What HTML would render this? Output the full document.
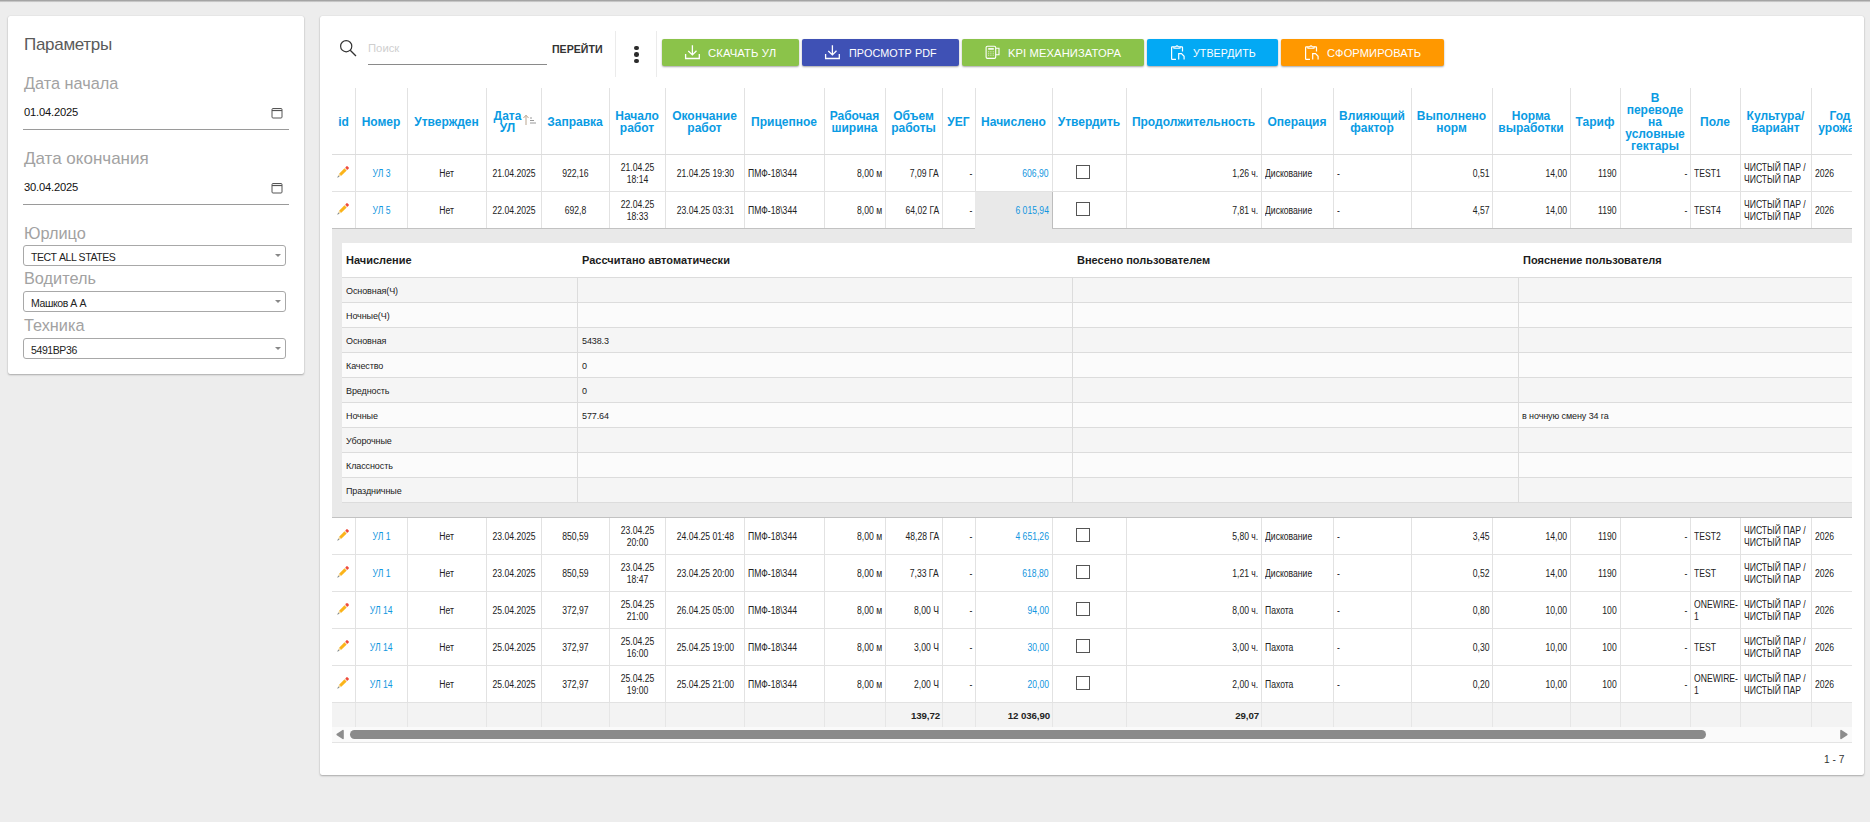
<!DOCTYPE html>
<html><head><meta charset="utf-8"><title>Путевые листы</title>
<style>
*{box-sizing:border-box;margin:0;padding:0}
html,body{width:1870px;height:822px;overflow:hidden;background:#ededed;font-family:"Liberation Sans",sans-serif;color:#222}
.abs{position:absolute}
.topband{position:absolute;left:0;top:0;width:1870px;height:4px;background:linear-gradient(#a4a4a4 0,#a4a4a4 1px,#d4d4d4 1.7px,#ededed 2.6px)}
.card{position:absolute;background:#fff;border-radius:2px;box-shadow:0 1px 2px rgba(0,0,0,.28),0 0 1px rgba(0,0,0,.18)}
.lbl{position:absolute;left:16px;font-size:16.3px;color:#a2a2a2;white-space:nowrap;line-height:20px}
.val{position:absolute;left:16px;font-size:11.2px;color:#111;white-space:nowrap;line-height:12px;letter-spacing:-0.2px}
.uline{position:absolute;left:15px;width:266px;height:1px;background:#9a9a9a}
.sel{position:absolute;left:15px;width:263px;height:21px;border:1px solid #a8a8a8;border-radius:3px}
.sel span{position:absolute;left:7px;top:4.5px;font-size:10.5px;color:#222;white-space:nowrap;line-height:12px;letter-spacing:-0.4px}
.sel i{position:absolute;right:4px;top:8px;width:0;height:0;border-left:3px solid transparent;border-right:3px solid transparent;border-top:3.5px solid #888}
.btn{position:absolute;top:39px;height:27px;border-radius:2px;box-shadow:0 1px 2px rgba(0,0,0,.35);color:#fff;font-size:10.8px;white-space:nowrap}
.btn svg{position:absolute;top:6px}
.btn span{position:absolute;top:8px;line-height:12px;letter-spacing:0.1px}
.hd{position:absolute;top:89px;height:66px;display:flex;align-items:center;justify-content:center;text-align:center;font-weight:bold;font-size:12px;line-height:12px;color:#0a9be3}
.vl{position:absolute;width:1px;background:#e2e2e2}
.hl{position:absolute;height:1px;background:#e2e2e2}
.c{position:absolute;display:flex;align-items:center;font-size:10px;line-height:12px;letter-spacing:0;color:#222;white-space:nowrap;padding:2px 3px 0 3px}
.c span{display:inline-block;transform:scaleX(.86)}
.c.cc{justify-content:center;text-align:center}
.c.cc span{transform-origin:50% 50%}
.c.cl{justify-content:flex-start}
.c.cl span{transform-origin:0 50%}
.c.cr{justify-content:flex-end;text-align:right}
.c.cr span{transform-origin:100% 50%}
.blue{color:#1296e0}
.cb{position:absolute;width:14px;height:14px;border:1.6px solid #555;background:#fff}
.dt{position:absolute;font-size:9px;line-height:12px;color:#222;white-space:nowrap;letter-spacing:-0.1px}
.dh{position:absolute;font-size:11px;font-weight:bold;color:#1c1c1c;white-space:nowrap;line-height:13px}
</style></head><body>
<div class="topband"></div>

<div class="card" style="left:8px;top:16px;width:296px;height:358px">
<div class="abs" style="left:16px;top:19px;font-size:17px;line-height:20px;color:#5a5a5a;letter-spacing:-0.3px;white-space:nowrap">Параметры</div>
<div class="lbl" style="top:57px;width:auto">Дата начала</div>
<div class="val" style="top:90px">01.04.2025</div>
<svg width="12" height="12" viewBox="0 0 12 12" style="position:absolute;left:263px;top:91px"><rect x="1" y="1.5" width="10" height="9.5" rx="1" fill="none" stroke="#555" stroke-width="1"/><line x1="1" y1="3.5" x2="11" y2="3.5" stroke="#555" stroke-width="1.2"/></svg>
<div class="uline" style="top:113px"></div>
<div class="lbl" style="top:133px;font-size:17px">Дата окончания</div>
<div class="val" style="top:165px">30.04.2025</div>
<svg width="12" height="12" viewBox="0 0 12 12" style="position:absolute;left:263px;top:166px"><rect x="1" y="1.5" width="10" height="9.5" rx="1" fill="none" stroke="#555" stroke-width="1"/><line x1="1" y1="3.5" x2="11" y2="3.5" stroke="#555" stroke-width="1.2"/></svg>
<div class="uline" style="top:188px"></div>
<div class="lbl" style="top:207px">Юрлицо</div>
<div class="sel" style="top:229px"><span>ТЕСТ ALL STATES</span><i></i></div>
<div class="lbl" style="top:252px">Водитель</div>
<div class="sel" style="top:275px"><span>Машков А А</span><i></i></div>
<div class="lbl" style="top:299px">Техника</div>
<div class="sel" style="top:322px"><span>5491ВР36</span><i></i></div>
</div>
<div class="card" style="left:320px;top:16px;width:1544px;height:759px"></div>
<svg class="abs" style="left:338px;top:38px" width="22" height="22" viewBox="0 0 22 22"><circle cx="8.2" cy="8.2" r="5.6" fill="none" stroke="#333" stroke-width="1.2"/><line x1="12.2" y1="12.2" x2="18" y2="18" stroke="#333" stroke-width="1.3"/></svg>
<div class="abs" style="left:368px;top:42px;font-size:11.3px;color:#cfcfcf;line-height:13px">Поиск</div>
<div class="abs" style="left:368px;top:64px;width:179px;height:1px;background:#8a8a8a"></div>
<div class="abs" style="left:552px;top:43px;font-size:10.6px;font-weight:bold;color:#333;line-height:13px">ПЕРЕЙТИ</div>
<div class="abs" style="left:615px;top:31px;width:1px;height:46px;background:#ebebeb"></div>
<div class="abs" style="left:656px;top:31px;width:1px;height:46px;background:#ebebeb"></div>
<div class="abs" style="left:634.1px;top:45.9px;width:4.6px;height:4.6px;border-radius:50%;background:#2b2b2b"></div>
<div class="abs" style="left:634.1px;top:52.2px;width:4.6px;height:4.6px;border-radius:50%;background:#2b2b2b"></div>
<div class="abs" style="left:634.1px;top:58.6px;width:4.6px;height:4.6px;border-radius:50%;background:#2b2b2b"></div>
<div class="btn" style="left:662px;width:137px;background:#8bc34a">
<svg width="18" height="16" viewBox="0 0 18 16" style="left:22px"><path d="M1.6 9V13.5H15.3V9" fill="none" stroke="#fff" stroke-width="1.3"/><path d="M8.4 0.2V10M4.3 6L8.4 9.9L12.5 5.8" fill="none" stroke="#fff" stroke-width="1.3"/></svg>
<span style="left:46px;font-size:11.3px">СКАЧАТЬ УЛ</span>
</div>
<div class="btn" style="left:802px;width:157px;background:#3f51b5">
<svg width="18" height="16" viewBox="0 0 18 16" style="left:22px"><path d="M1.6 9V13.5H15.3V9" fill="none" stroke="#fff" stroke-width="1.3"/><path d="M8.4 0.2V10M4.3 6L8.4 9.9L12.5 5.8" fill="none" stroke="#fff" stroke-width="1.3"/></svg>
<span style="left:47px;font-size:10.8px">ПРОСМОТР PDF</span>
</div>
<div class="btn" style="left:962px;width:182px;background:#8bc34a">
<svg width="18" height="16" viewBox="0 0 18 16" style="left:22px"><rect x="2.1" y="1.2" width="9.6" height="12.2" rx="1.3" fill="none" stroke="#fff" stroke-width="1.1"/><rect x="4.2" y="3.1" width="5.6" height="1.6" fill="#fff"/><path d="M4.7 6.3V11M6.9 6.3V11M9.2 6.3V11" stroke="#fff" stroke-width="0.9" stroke-dasharray="1 1" opacity=".9"/><path d="M11.8 3.3H15V9.8H11.8" fill="none" stroke="#fff" stroke-width="1.1"/></svg>
<span style="left:46px;font-size:11.2px">KPI МЕХАНИЗАТОРА</span>
</div>
<div class="btn" style="left:1147px;width:131px;background:#03a9f4">
<svg width="18" height="16" viewBox="0 0 18 16" style="left:22px"><path d="M4.8 1.8H3.2Q2.6 1.8 2.6 2.4V13.7Q2.6 14.3 3.2 14.3H7" fill="none" stroke="#fff" stroke-width="1.2"/><path d="M11 1.8H12.9Q13.5 1.8 13.5 2.4V6.4" fill="none" stroke="#fff" stroke-width="1.2"/><path d="M4.9 3.2V1.8H6.6Q8 0 9.4 1.8H11V3.2Z" fill="none" stroke="#fff" stroke-width="1.1"/><path d="M9.7 14.6V8.7H12.5L15.1 11.3V14.6" fill="none" stroke="#fff" stroke-width="1.2"/></svg>
<span style="left:46px;font-size:10.6px">УТВЕРДИТЬ</span>
</div>
<div class="btn" style="left:1281px;width:163px;background:#ff9800">
<svg width="18" height="16" viewBox="0 0 18 16" style="left:22px"><path d="M4.8 1.8H3.2Q2.6 1.8 2.6 2.4V13.7Q2.6 14.3 3.2 14.3H7" fill="none" stroke="#fff" stroke-width="1.2"/><path d="M11 1.8H12.9Q13.5 1.8 13.5 2.4V6.4" fill="none" stroke="#fff" stroke-width="1.2"/><path d="M4.9 3.2V1.8H6.6Q8 0 9.4 1.8H11V3.2Z" fill="none" stroke="#fff" stroke-width="1.1"/><path d="M9.7 14.6V8.7H12.5L15.1 11.3V14.6" fill="none" stroke="#fff" stroke-width="1.2"/></svg>
<span style="left:46px;font-size:11.1px">СФОРМИРОВАТЬ</span>
</div>
<div class="hd" style="left:332px;width:23px">id</div>
<div class="hd" style="left:355px;width:52px">Номер</div>
<div class="hd" style="left:407px;width:79px">Утвержден</div>
<div class="hd" style="left:486px;width:55px"><span style="display:inline-block;position:relative;left:-6px">Дата<br>УЛ</span></div>
<div class="hd" style="left:541px;width:68px">Заправка</div>
<div class="hd" style="left:609px;width:56px">Начало<br>работ</div>
<div class="hd" style="left:665px;width:79px">Окончание<br>работ</div>
<div class="hd" style="left:744px;width:80px">Прицепное</div>
<div class="hd" style="left:824px;width:61px">Рабочая<br>ширина</div>
<div class="hd" style="left:885px;width:57px">Объем<br>работы</div>
<div class="hd" style="left:942px;width:33px">УЕГ</div>
<div class="hd" style="left:975px;width:77px">Начислено</div>
<div class="hd" style="left:1052px;width:74px">Утвердить</div>
<div class="hd" style="left:1126px;width:135px">Продолжительность</div>
<div class="hd" style="left:1261px;width:72px">Операция</div>
<div class="hd" style="left:1333px;width:78px">Влияющий<br>фактор</div>
<div class="hd" style="left:1411px;width:81px">Выполнено<br>норм</div>
<div class="hd" style="left:1492px;width:78px">Норма<br>выработки</div>
<div class="hd" style="left:1570px;width:50px">Тариф</div>
<div class="hd" style="left:1620px;width:70px">В<br>переводе<br>на<br>условные<br>гектары</div>
<div class="hd" style="left:1690px;width:50px">Поле</div>
<div class="hd" style="left:1740px;width:71px">Культура/<br>вариант</div>
<div class="hd" style="left:1811px;width:58px">Год<br>урожая</div>
<svg class="abs" style="left:522px;top:114px" width="15" height="12" viewBox="0 0 15 12"><path d="M4 11V1.5M1.5 4L4 1.2L6.5 4" fill="none" stroke="#b9a58f" stroke-width="1"/><path d="M8 4H10M8 6.5H12M8 9H14" stroke="#9a9a9a" stroke-width="1"/></svg>
<div class="hl" style="left:332px;top:154px;width:1520px;background:#dcdcdc"></div>
<div class="vl" style="left:355px;top:88px;height:66px"></div>
<div class="vl" style="left:355px;top:155px;height:73px"></div>
<div class="vl" style="left:355px;top:518px;height:209px"></div>
<div class="vl" style="left:407px;top:88px;height:66px"></div>
<div class="vl" style="left:407px;top:155px;height:73px"></div>
<div class="vl" style="left:407px;top:518px;height:209px"></div>
<div class="vl" style="left:486px;top:88px;height:66px"></div>
<div class="vl" style="left:486px;top:155px;height:73px"></div>
<div class="vl" style="left:486px;top:518px;height:209px"></div>
<div class="vl" style="left:541px;top:88px;height:66px"></div>
<div class="vl" style="left:541px;top:155px;height:73px"></div>
<div class="vl" style="left:541px;top:518px;height:209px"></div>
<div class="vl" style="left:609px;top:88px;height:66px"></div>
<div class="vl" style="left:609px;top:155px;height:73px"></div>
<div class="vl" style="left:609px;top:518px;height:209px"></div>
<div class="vl" style="left:665px;top:88px;height:66px"></div>
<div class="vl" style="left:665px;top:155px;height:73px"></div>
<div class="vl" style="left:665px;top:518px;height:209px"></div>
<div class="vl" style="left:744px;top:88px;height:66px"></div>
<div class="vl" style="left:744px;top:155px;height:73px"></div>
<div class="vl" style="left:744px;top:518px;height:209px"></div>
<div class="vl" style="left:824px;top:88px;height:66px"></div>
<div class="vl" style="left:824px;top:155px;height:73px"></div>
<div class="vl" style="left:824px;top:518px;height:209px"></div>
<div class="vl" style="left:885px;top:88px;height:66px"></div>
<div class="vl" style="left:885px;top:155px;height:73px"></div>
<div class="vl" style="left:885px;top:518px;height:209px"></div>
<div class="vl" style="left:942px;top:88px;height:66px"></div>
<div class="vl" style="left:942px;top:155px;height:73px"></div>
<div class="vl" style="left:942px;top:518px;height:209px"></div>
<div class="vl" style="left:975px;top:88px;height:66px"></div>
<div class="vl" style="left:975px;top:155px;height:73px"></div>
<div class="vl" style="left:975px;top:518px;height:209px"></div>
<div class="vl" style="left:1052px;top:88px;height:66px"></div>
<div class="vl" style="left:1052px;top:155px;height:73px"></div>
<div class="vl" style="left:1052px;top:518px;height:209px"></div>
<div class="vl" style="left:1126px;top:88px;height:66px"></div>
<div class="vl" style="left:1126px;top:155px;height:73px"></div>
<div class="vl" style="left:1126px;top:518px;height:209px"></div>
<div class="vl" style="left:1261px;top:88px;height:66px"></div>
<div class="vl" style="left:1261px;top:155px;height:73px"></div>
<div class="vl" style="left:1261px;top:518px;height:209px"></div>
<div class="vl" style="left:1333px;top:88px;height:66px"></div>
<div class="vl" style="left:1333px;top:155px;height:73px"></div>
<div class="vl" style="left:1333px;top:518px;height:209px"></div>
<div class="vl" style="left:1411px;top:88px;height:66px"></div>
<div class="vl" style="left:1411px;top:155px;height:73px"></div>
<div class="vl" style="left:1411px;top:518px;height:209px"></div>
<div class="vl" style="left:1492px;top:88px;height:66px"></div>
<div class="vl" style="left:1492px;top:155px;height:73px"></div>
<div class="vl" style="left:1492px;top:518px;height:209px"></div>
<div class="vl" style="left:1570px;top:88px;height:66px"></div>
<div class="vl" style="left:1570px;top:155px;height:73px"></div>
<div class="vl" style="left:1570px;top:518px;height:209px"></div>
<div class="vl" style="left:1620px;top:88px;height:66px"></div>
<div class="vl" style="left:1620px;top:155px;height:73px"></div>
<div class="vl" style="left:1620px;top:518px;height:209px"></div>
<div class="vl" style="left:1690px;top:88px;height:66px"></div>
<div class="vl" style="left:1690px;top:155px;height:73px"></div>
<div class="vl" style="left:1690px;top:518px;height:209px"></div>
<div class="vl" style="left:1740px;top:88px;height:66px"></div>
<div class="vl" style="left:1740px;top:155px;height:73px"></div>
<div class="vl" style="left:1740px;top:518px;height:209px"></div>
<div class="vl" style="left:1811px;top:88px;height:66px"></div>
<div class="vl" style="left:1811px;top:155px;height:73px"></div>
<div class="vl" style="left:1811px;top:518px;height:209px"></div>
<div class="hl" style="left:332px;top:191px;width:1520px"></div>
<div class="hl" style="left:332px;top:554px;width:1520px"></div>
<div class="hl" style="left:332px;top:591px;width:1520px"></div>
<div class="hl" style="left:332px;top:628px;width:1520px"></div>
<div class="hl" style="left:332px;top:665px;width:1520px"></div>
<div class="hl" style="left:332px;top:702px;width:1520px"></div>
<div class="abs" style="left:975px;top:192px;width:77px;height:37px;background:#e9e9e9"></div>
<div class="abs" style="left:1052px;top:192px;width:1px;height:37px;background:#bdbdbd"></div>
<div class="abs" style="left:332px;top:229px;width:1520px;height:288px;background:#e9e9e9"></div>
<div class="abs" style="left:332px;top:228px;width:643px;height:1px;background:#c2c2c2"></div>
<div class="abs" style="left:1052px;top:228px;width:800px;height:1px;background:#c2c2c2"></div>
<div class="abs" style="left:332px;top:517px;width:1520px;height:1px;background:#c2c2c2"></div>
<div class="abs" style="left:332px;top:155px;width:23px;height:36px"><svg width="16" height="16" viewBox="0 0 16 16" style="position:absolute;left:4px;top:10px"><g transform="translate(1.4 12.6) rotate(-45)"><polygon points="0,0 4,-1.55 4,1.55" fill="#f5d9a0"/><polygon points="-0.2,0 2,-0.9 2,0.9" fill="#7b8a9a"/><rect x="4" y="-1.55" width="7.6" height="3.1" fill="#fbb41a"/><rect x="11.6" y="-1.55" width="0.9" height="3.1" fill="#f1dccb"/><rect x="12.5" y="-1.55" width="2.6" height="3.1" rx="0.6" fill="#ef4a3b"/></g></svg></div>
<div class="c cc blue" style="left:356px;top:155px;width:51px;height:36px"><span>УЛ 3</span></div>
<div class="c cc " style="left:408px;top:155px;width:78px;height:36px"><span>Нет</span></div>
<div class="c cc " style="left:487px;top:155px;width:54px;height:36px"><span>21.04.2025</span></div>
<div class="c cc " style="left:542px;top:155px;width:67px;height:36px"><span>922,16</span></div>
<div class="c cc " style="left:610px;top:155px;width:55px;height:36px"><span>21.04.25<br>18:14</span></div>
<div class="c cc " style="left:666px;top:155px;width:78px;height:36px"><span>21.04.25 19:30</span></div>
<div class="c cl " style="left:745px;top:155px;width:79px;height:36px"><span>ПМФ-18\344</span></div>
<div class="c cr " style="left:825px;top:155px;width:60px;height:36px"><span>8,00 м</span></div>
<div class="c cr " style="left:886px;top:155px;width:56px;height:36px"><span>7,09 ГА</span></div>
<div class="c cr " style="left:943px;top:155px;width:32px;height:36px"><span>-</span></div>
<div class="c cr blue" style="left:976px;top:155px;width:76px;height:36px"><span>606,90</span></div>
<div class="cb" style="left:1076px;top:165px"></div>
<div class="c cr " style="left:1127px;top:155px;width:134px;height:36px"><span>1,26 ч.</span></div>
<div class="c cl " style="left:1262px;top:155px;width:71px;height:36px"><span>Дискование</span></div>
<div class="c cl " style="left:1334px;top:155px;width:77px;height:36px"><span>-</span></div>
<div class="c cr " style="left:1412px;top:155px;width:80px;height:36px"><span>0,51</span></div>
<div class="c cr " style="left:1493px;top:155px;width:77px;height:36px"><span>14,00</span></div>
<div class="c cr " style="left:1571px;top:155px;width:49px;height:36px"><span>1190</span></div>
<div class="c cr " style="left:1621px;top:155px;width:69px;height:36px"><span>-</span></div>
<div class="c cl " style="left:1691px;top:155px;width:49px;height:36px"><span>TEST1</span></div>
<div class="c cl " style="left:1741px;top:155px;width:70px;height:36px"><span>ЧИСТЫЙ ПАР /<br>ЧИСТЫЙ ПАР</span></div>
<div class="c cl " style="left:1812px;top:155px;width:57px;height:36px"><span>2026</span></div>
<div class="abs" style="left:332px;top:192px;width:23px;height:36px"><svg width="16" height="16" viewBox="0 0 16 16" style="position:absolute;left:4px;top:10px"><g transform="translate(1.4 12.6) rotate(-45)"><polygon points="0,0 4,-1.55 4,1.55" fill="#f5d9a0"/><polygon points="-0.2,0 2,-0.9 2,0.9" fill="#7b8a9a"/><rect x="4" y="-1.55" width="7.6" height="3.1" fill="#fbb41a"/><rect x="11.6" y="-1.55" width="0.9" height="3.1" fill="#f1dccb"/><rect x="12.5" y="-1.55" width="2.6" height="3.1" rx="0.6" fill="#ef4a3b"/></g></svg></div>
<div class="c cc blue" style="left:356px;top:192px;width:51px;height:36px"><span>УЛ 5</span></div>
<div class="c cc " style="left:408px;top:192px;width:78px;height:36px"><span>Нет</span></div>
<div class="c cc " style="left:487px;top:192px;width:54px;height:36px"><span>22.04.2025</span></div>
<div class="c cc " style="left:542px;top:192px;width:67px;height:36px"><span>692,8</span></div>
<div class="c cc " style="left:610px;top:192px;width:55px;height:36px"><span>22.04.25<br>18:33</span></div>
<div class="c cc " style="left:666px;top:192px;width:78px;height:36px"><span>23.04.25 03:31</span></div>
<div class="c cl " style="left:745px;top:192px;width:79px;height:36px"><span>ПМФ-18\344</span></div>
<div class="c cr " style="left:825px;top:192px;width:60px;height:36px"><span>8,00 м</span></div>
<div class="c cr " style="left:886px;top:192px;width:56px;height:36px"><span>64,02 ГА</span></div>
<div class="c cr " style="left:943px;top:192px;width:32px;height:36px"><span>-</span></div>
<div class="c cr blue" style="left:976px;top:192px;width:76px;height:36px"><span>6 015,94</span></div>
<div class="cb" style="left:1076px;top:202px"></div>
<div class="c cr " style="left:1127px;top:192px;width:134px;height:36px"><span>7,81 ч.</span></div>
<div class="c cl " style="left:1262px;top:192px;width:71px;height:36px"><span>Дискование</span></div>
<div class="c cl " style="left:1334px;top:192px;width:77px;height:36px"><span>-</span></div>
<div class="c cr " style="left:1412px;top:192px;width:80px;height:36px"><span>4,57</span></div>
<div class="c cr " style="left:1493px;top:192px;width:77px;height:36px"><span>14,00</span></div>
<div class="c cr " style="left:1571px;top:192px;width:49px;height:36px"><span>1190</span></div>
<div class="c cr " style="left:1621px;top:192px;width:69px;height:36px"><span>-</span></div>
<div class="c cl " style="left:1691px;top:192px;width:49px;height:36px"><span>TEST4</span></div>
<div class="c cl " style="left:1741px;top:192px;width:70px;height:36px"><span>ЧИСТЫЙ ПАР /<br>ЧИСТЫЙ ПАР</span></div>
<div class="c cl " style="left:1812px;top:192px;width:57px;height:36px"><span>2026</span></div>
<div class="abs" style="left:332px;top:518px;width:23px;height:36px"><svg width="16" height="16" viewBox="0 0 16 16" style="position:absolute;left:4px;top:10px"><g transform="translate(1.4 12.6) rotate(-45)"><polygon points="0,0 4,-1.55 4,1.55" fill="#f5d9a0"/><polygon points="-0.2,0 2,-0.9 2,0.9" fill="#7b8a9a"/><rect x="4" y="-1.55" width="7.6" height="3.1" fill="#fbb41a"/><rect x="11.6" y="-1.55" width="0.9" height="3.1" fill="#f1dccb"/><rect x="12.5" y="-1.55" width="2.6" height="3.1" rx="0.6" fill="#ef4a3b"/></g></svg></div>
<div class="c cc blue" style="left:356px;top:518px;width:51px;height:36px"><span>УЛ 1</span></div>
<div class="c cc " style="left:408px;top:518px;width:78px;height:36px"><span>Нет</span></div>
<div class="c cc " style="left:487px;top:518px;width:54px;height:36px"><span>23.04.2025</span></div>
<div class="c cc " style="left:542px;top:518px;width:67px;height:36px"><span>850,59</span></div>
<div class="c cc " style="left:610px;top:518px;width:55px;height:36px"><span>23.04.25<br>20:00</span></div>
<div class="c cc " style="left:666px;top:518px;width:78px;height:36px"><span>24.04.25 01:48</span></div>
<div class="c cl " style="left:745px;top:518px;width:79px;height:36px"><span>ПМФ-18\344</span></div>
<div class="c cr " style="left:825px;top:518px;width:60px;height:36px"><span>8,00 м</span></div>
<div class="c cr " style="left:886px;top:518px;width:56px;height:36px"><span>48,28 ГА</span></div>
<div class="c cr " style="left:943px;top:518px;width:32px;height:36px"><span>-</span></div>
<div class="c cr blue" style="left:976px;top:518px;width:76px;height:36px"><span>4 651,26</span></div>
<div class="cb" style="left:1076px;top:528px"></div>
<div class="c cr " style="left:1127px;top:518px;width:134px;height:36px"><span>5,80 ч.</span></div>
<div class="c cl " style="left:1262px;top:518px;width:71px;height:36px"><span>Дискование</span></div>
<div class="c cl " style="left:1334px;top:518px;width:77px;height:36px"><span>-</span></div>
<div class="c cr " style="left:1412px;top:518px;width:80px;height:36px"><span>3,45</span></div>
<div class="c cr " style="left:1493px;top:518px;width:77px;height:36px"><span>14,00</span></div>
<div class="c cr " style="left:1571px;top:518px;width:49px;height:36px"><span>1190</span></div>
<div class="c cr " style="left:1621px;top:518px;width:69px;height:36px"><span>-</span></div>
<div class="c cl " style="left:1691px;top:518px;width:49px;height:36px"><span>TEST2</span></div>
<div class="c cl " style="left:1741px;top:518px;width:70px;height:36px"><span>ЧИСТЫЙ ПАР /<br>ЧИСТЫЙ ПАР</span></div>
<div class="c cl " style="left:1812px;top:518px;width:57px;height:36px"><span>2026</span></div>
<div class="abs" style="left:332px;top:555px;width:23px;height:36px"><svg width="16" height="16" viewBox="0 0 16 16" style="position:absolute;left:4px;top:10px"><g transform="translate(1.4 12.6) rotate(-45)"><polygon points="0,0 4,-1.55 4,1.55" fill="#f5d9a0"/><polygon points="-0.2,0 2,-0.9 2,0.9" fill="#7b8a9a"/><rect x="4" y="-1.55" width="7.6" height="3.1" fill="#fbb41a"/><rect x="11.6" y="-1.55" width="0.9" height="3.1" fill="#f1dccb"/><rect x="12.5" y="-1.55" width="2.6" height="3.1" rx="0.6" fill="#ef4a3b"/></g></svg></div>
<div class="c cc blue" style="left:356px;top:555px;width:51px;height:36px"><span>УЛ 1</span></div>
<div class="c cc " style="left:408px;top:555px;width:78px;height:36px"><span>Нет</span></div>
<div class="c cc " style="left:487px;top:555px;width:54px;height:36px"><span>23.04.2025</span></div>
<div class="c cc " style="left:542px;top:555px;width:67px;height:36px"><span>850,59</span></div>
<div class="c cc " style="left:610px;top:555px;width:55px;height:36px"><span>23.04.25<br>18:47</span></div>
<div class="c cc " style="left:666px;top:555px;width:78px;height:36px"><span>23.04.25 20:00</span></div>
<div class="c cl " style="left:745px;top:555px;width:79px;height:36px"><span>ПМФ-18\344</span></div>
<div class="c cr " style="left:825px;top:555px;width:60px;height:36px"><span>8,00 м</span></div>
<div class="c cr " style="left:886px;top:555px;width:56px;height:36px"><span>7,33 ГА</span></div>
<div class="c cr " style="left:943px;top:555px;width:32px;height:36px"><span>-</span></div>
<div class="c cr blue" style="left:976px;top:555px;width:76px;height:36px"><span>618,80</span></div>
<div class="cb" style="left:1076px;top:565px"></div>
<div class="c cr " style="left:1127px;top:555px;width:134px;height:36px"><span>1,21 ч.</span></div>
<div class="c cl " style="left:1262px;top:555px;width:71px;height:36px"><span>Дискование</span></div>
<div class="c cl " style="left:1334px;top:555px;width:77px;height:36px"><span>-</span></div>
<div class="c cr " style="left:1412px;top:555px;width:80px;height:36px"><span>0,52</span></div>
<div class="c cr " style="left:1493px;top:555px;width:77px;height:36px"><span>14,00</span></div>
<div class="c cr " style="left:1571px;top:555px;width:49px;height:36px"><span>1190</span></div>
<div class="c cr " style="left:1621px;top:555px;width:69px;height:36px"><span>-</span></div>
<div class="c cl " style="left:1691px;top:555px;width:49px;height:36px"><span>TEST</span></div>
<div class="c cl " style="left:1741px;top:555px;width:70px;height:36px"><span>ЧИСТЫЙ ПАР /<br>ЧИСТЫЙ ПАР</span></div>
<div class="c cl " style="left:1812px;top:555px;width:57px;height:36px"><span>2026</span></div>
<div class="abs" style="left:332px;top:592px;width:23px;height:36px"><svg width="16" height="16" viewBox="0 0 16 16" style="position:absolute;left:4px;top:10px"><g transform="translate(1.4 12.6) rotate(-45)"><polygon points="0,0 4,-1.55 4,1.55" fill="#f5d9a0"/><polygon points="-0.2,0 2,-0.9 2,0.9" fill="#7b8a9a"/><rect x="4" y="-1.55" width="7.6" height="3.1" fill="#fbb41a"/><rect x="11.6" y="-1.55" width="0.9" height="3.1" fill="#f1dccb"/><rect x="12.5" y="-1.55" width="2.6" height="3.1" rx="0.6" fill="#ef4a3b"/></g></svg></div>
<div class="c cc blue" style="left:356px;top:592px;width:51px;height:36px"><span>УЛ 14</span></div>
<div class="c cc " style="left:408px;top:592px;width:78px;height:36px"><span>Нет</span></div>
<div class="c cc " style="left:487px;top:592px;width:54px;height:36px"><span>25.04.2025</span></div>
<div class="c cc " style="left:542px;top:592px;width:67px;height:36px"><span>372,97</span></div>
<div class="c cc " style="left:610px;top:592px;width:55px;height:36px"><span>25.04.25<br>21:00</span></div>
<div class="c cc " style="left:666px;top:592px;width:78px;height:36px"><span>26.04.25 05:00</span></div>
<div class="c cl " style="left:745px;top:592px;width:79px;height:36px"><span>ПМФ-18\344</span></div>
<div class="c cr " style="left:825px;top:592px;width:60px;height:36px"><span>8,00 м</span></div>
<div class="c cr " style="left:886px;top:592px;width:56px;height:36px"><span>8,00 Ч</span></div>
<div class="c cr " style="left:943px;top:592px;width:32px;height:36px"><span>-</span></div>
<div class="c cr blue" style="left:976px;top:592px;width:76px;height:36px"><span>94,00</span></div>
<div class="cb" style="left:1076px;top:602px"></div>
<div class="c cr " style="left:1127px;top:592px;width:134px;height:36px"><span>8,00 ч.</span></div>
<div class="c cl " style="left:1262px;top:592px;width:71px;height:36px"><span>Пахота</span></div>
<div class="c cl " style="left:1334px;top:592px;width:77px;height:36px"><span>-</span></div>
<div class="c cr " style="left:1412px;top:592px;width:80px;height:36px"><span>0,80</span></div>
<div class="c cr " style="left:1493px;top:592px;width:77px;height:36px"><span>10,00</span></div>
<div class="c cr " style="left:1571px;top:592px;width:49px;height:36px"><span>100</span></div>
<div class="c cr " style="left:1621px;top:592px;width:69px;height:36px"><span>-</span></div>
<div class="c cl " style="left:1691px;top:592px;width:49px;height:36px"><span>ONEWIRE-<br>1</span></div>
<div class="c cl " style="left:1741px;top:592px;width:70px;height:36px"><span>ЧИСТЫЙ ПАР /<br>ЧИСТЫЙ ПАР</span></div>
<div class="c cl " style="left:1812px;top:592px;width:57px;height:36px"><span>2026</span></div>
<div class="abs" style="left:332px;top:629px;width:23px;height:36px"><svg width="16" height="16" viewBox="0 0 16 16" style="position:absolute;left:4px;top:10px"><g transform="translate(1.4 12.6) rotate(-45)"><polygon points="0,0 4,-1.55 4,1.55" fill="#f5d9a0"/><polygon points="-0.2,0 2,-0.9 2,0.9" fill="#7b8a9a"/><rect x="4" y="-1.55" width="7.6" height="3.1" fill="#fbb41a"/><rect x="11.6" y="-1.55" width="0.9" height="3.1" fill="#f1dccb"/><rect x="12.5" y="-1.55" width="2.6" height="3.1" rx="0.6" fill="#ef4a3b"/></g></svg></div>
<div class="c cc blue" style="left:356px;top:629px;width:51px;height:36px"><span>УЛ 14</span></div>
<div class="c cc " style="left:408px;top:629px;width:78px;height:36px"><span>Нет</span></div>
<div class="c cc " style="left:487px;top:629px;width:54px;height:36px"><span>25.04.2025</span></div>
<div class="c cc " style="left:542px;top:629px;width:67px;height:36px"><span>372,97</span></div>
<div class="c cc " style="left:610px;top:629px;width:55px;height:36px"><span>25.04.25<br>16:00</span></div>
<div class="c cc " style="left:666px;top:629px;width:78px;height:36px"><span>25.04.25 19:00</span></div>
<div class="c cl " style="left:745px;top:629px;width:79px;height:36px"><span>ПМФ-18\344</span></div>
<div class="c cr " style="left:825px;top:629px;width:60px;height:36px"><span>8,00 м</span></div>
<div class="c cr " style="left:886px;top:629px;width:56px;height:36px"><span>3,00 Ч</span></div>
<div class="c cr " style="left:943px;top:629px;width:32px;height:36px"><span>-</span></div>
<div class="c cr blue" style="left:976px;top:629px;width:76px;height:36px"><span>30,00</span></div>
<div class="cb" style="left:1076px;top:639px"></div>
<div class="c cr " style="left:1127px;top:629px;width:134px;height:36px"><span>3,00 ч.</span></div>
<div class="c cl " style="left:1262px;top:629px;width:71px;height:36px"><span>Пахота</span></div>
<div class="c cl " style="left:1334px;top:629px;width:77px;height:36px"><span>-</span></div>
<div class="c cr " style="left:1412px;top:629px;width:80px;height:36px"><span>0,30</span></div>
<div class="c cr " style="left:1493px;top:629px;width:77px;height:36px"><span>10,00</span></div>
<div class="c cr " style="left:1571px;top:629px;width:49px;height:36px"><span>100</span></div>
<div class="c cr " style="left:1621px;top:629px;width:69px;height:36px"><span>-</span></div>
<div class="c cl " style="left:1691px;top:629px;width:49px;height:36px"><span>TEST</span></div>
<div class="c cl " style="left:1741px;top:629px;width:70px;height:36px"><span>ЧИСТЫЙ ПАР /<br>ЧИСТЫЙ ПАР</span></div>
<div class="c cl " style="left:1812px;top:629px;width:57px;height:36px"><span>2026</span></div>
<div class="abs" style="left:332px;top:666px;width:23px;height:36px"><svg width="16" height="16" viewBox="0 0 16 16" style="position:absolute;left:4px;top:10px"><g transform="translate(1.4 12.6) rotate(-45)"><polygon points="0,0 4,-1.55 4,1.55" fill="#f5d9a0"/><polygon points="-0.2,0 2,-0.9 2,0.9" fill="#7b8a9a"/><rect x="4" y="-1.55" width="7.6" height="3.1" fill="#fbb41a"/><rect x="11.6" y="-1.55" width="0.9" height="3.1" fill="#f1dccb"/><rect x="12.5" y="-1.55" width="2.6" height="3.1" rx="0.6" fill="#ef4a3b"/></g></svg></div>
<div class="c cc blue" style="left:356px;top:666px;width:51px;height:36px"><span>УЛ 14</span></div>
<div class="c cc " style="left:408px;top:666px;width:78px;height:36px"><span>Нет</span></div>
<div class="c cc " style="left:487px;top:666px;width:54px;height:36px"><span>25.04.2025</span></div>
<div class="c cc " style="left:542px;top:666px;width:67px;height:36px"><span>372,97</span></div>
<div class="c cc " style="left:610px;top:666px;width:55px;height:36px"><span>25.04.25<br>19:00</span></div>
<div class="c cc " style="left:666px;top:666px;width:78px;height:36px"><span>25.04.25 21:00</span></div>
<div class="c cl " style="left:745px;top:666px;width:79px;height:36px"><span>ПМФ-18\344</span></div>
<div class="c cr " style="left:825px;top:666px;width:60px;height:36px"><span>8,00 м</span></div>
<div class="c cr " style="left:886px;top:666px;width:56px;height:36px"><span>2,00 Ч</span></div>
<div class="c cr " style="left:943px;top:666px;width:32px;height:36px"><span>-</span></div>
<div class="c cr blue" style="left:976px;top:666px;width:76px;height:36px"><span>20,00</span></div>
<div class="cb" style="left:1076px;top:676px"></div>
<div class="c cr " style="left:1127px;top:666px;width:134px;height:36px"><span>2,00 ч.</span></div>
<div class="c cl " style="left:1262px;top:666px;width:71px;height:36px"><span>Пахота</span></div>
<div class="c cl " style="left:1334px;top:666px;width:77px;height:36px"><span>-</span></div>
<div class="c cr " style="left:1412px;top:666px;width:80px;height:36px"><span>0,20</span></div>
<div class="c cr " style="left:1493px;top:666px;width:77px;height:36px"><span>10,00</span></div>
<div class="c cr " style="left:1571px;top:666px;width:49px;height:36px"><span>100</span></div>
<div class="c cr " style="left:1621px;top:666px;width:69px;height:36px"><span>-</span></div>
<div class="c cl " style="left:1691px;top:666px;width:49px;height:36px"><span>ONEWIRE-<br>1</span></div>
<div class="c cl " style="left:1741px;top:666px;width:70px;height:36px"><span>ЧИСТЫЙ ПАР /<br>ЧИСТЫЙ ПАР</span></div>
<div class="c cl " style="left:1812px;top:666px;width:57px;height:36px"><span>2026</span></div>
<div class="abs" style="left:332px;top:703px;width:1520px;height:24px;background:#f3f3f3"></div>
<div class="vl" style="left:355px;top:703px;height:24px;background:#e6e6e6"></div>
<div class="vl" style="left:407px;top:703px;height:24px;background:#e6e6e6"></div>
<div class="vl" style="left:486px;top:703px;height:24px;background:#e6e6e6"></div>
<div class="vl" style="left:541px;top:703px;height:24px;background:#e6e6e6"></div>
<div class="vl" style="left:609px;top:703px;height:24px;background:#e6e6e6"></div>
<div class="vl" style="left:665px;top:703px;height:24px;background:#e6e6e6"></div>
<div class="vl" style="left:744px;top:703px;height:24px;background:#e6e6e6"></div>
<div class="vl" style="left:824px;top:703px;height:24px;background:#e6e6e6"></div>
<div class="vl" style="left:885px;top:703px;height:24px;background:#e6e6e6"></div>
<div class="vl" style="left:942px;top:703px;height:24px;background:#e6e6e6"></div>
<div class="vl" style="left:975px;top:703px;height:24px;background:#e6e6e6"></div>
<div class="vl" style="left:1052px;top:703px;height:24px;background:#e6e6e6"></div>
<div class="vl" style="left:1126px;top:703px;height:24px;background:#e6e6e6"></div>
<div class="vl" style="left:1261px;top:703px;height:24px;background:#e6e6e6"></div>
<div class="vl" style="left:1333px;top:703px;height:24px;background:#e6e6e6"></div>
<div class="vl" style="left:1411px;top:703px;height:24px;background:#e6e6e6"></div>
<div class="vl" style="left:1492px;top:703px;height:24px;background:#e6e6e6"></div>
<div class="vl" style="left:1570px;top:703px;height:24px;background:#e6e6e6"></div>
<div class="vl" style="left:1620px;top:703px;height:24px;background:#e6e6e6"></div>
<div class="vl" style="left:1690px;top:703px;height:24px;background:#e6e6e6"></div>
<div class="vl" style="left:1740px;top:703px;height:24px;background:#e6e6e6"></div>
<div class="vl" style="left:1811px;top:703px;height:24px;background:#e6e6e6"></div>
<div class="c cr" style="left:886px;top:703px;width:56px;height:24px;font-weight:bold;font-size:9.7px;letter-spacing:-0.1px;padding-right:2px">139,72</div>
<div class="c cr" style="left:976px;top:703px;width:76px;height:24px;font-weight:bold;font-size:9.7px;letter-spacing:-0.1px;padding-right:2px">12 036,90</div>
<div class="c cr" style="left:1127px;top:703px;width:134px;height:24px;font-weight:bold;font-size:9.7px;letter-spacing:-0.1px;padding-right:2px">29,07</div>
<div class="abs" style="left:332px;top:727px;width:1520px;height:15px;background:#fafafa"></div>
<div class="abs" style="left:332px;top:742px;width:1520px;height:1px;background:#e4e4e4"></div>
<svg class="abs" style="left:335px;top:729px" width="10" height="11" viewBox="0 0 10 11"><polygon points="2.2,5.5 8,1.6 8,9.4" fill="#8c8c8c" stroke="#8c8c8c" stroke-width="1.6" stroke-linejoin="round"/></svg>
<svg class="abs" style="left:1839px;top:729px" width="10" height="11" viewBox="0 0 10 11"><polygon points="7.8,5.5 2,1.6 2,9.4" fill="#8c8c8c" stroke="#8c8c8c" stroke-width="1.6" stroke-linejoin="round"/></svg>
<div class="abs" style="left:350px;top:730px;width:1356px;height:9px;border-radius:4.5px;background:#8a8a8a"></div>
<div class="abs" style="left:1824px;top:754px;font-size:10.2px;line-height:12px;color:#333;white-space:nowrap">1 - 7</div>
<div class="abs" style="left:1852px;top:80px;width:12px;height:690px;background:#fff"></div>
<div class="abs" style="left:342px;top:243px;width:1510px;height:260px;background:#fff"></div>
<div class="dh" style="left:346px;top:254px">Начисление</div>
<div class="dh" style="left:582px;top:254px">Рассчитано автоматически</div>
<div class="dh" style="left:1077px;top:254px">Внесено пользователем</div>
<div class="dh" style="left:1523px;top:254px">Пояснение пользователя</div>
<div class="abs" style="left:342px;top:278px;width:1510px;height:24px;background:#f5f5f5"></div>
<div class="dt" style="left:346px;top:285px">Основная(Ч)</div>
<div class="abs" style="left:342px;top:303px;width:1510px;height:24px;background:#fbfbfb"></div>
<div class="dt" style="left:346px;top:310px">Ночные(Ч)</div>
<div class="abs" style="left:342px;top:328px;width:1510px;height:24px;background:#f5f5f5"></div>
<div class="dt" style="left:346px;top:335px">Основная</div>
<div class="dt" style="left:582px;top:335px">5438.3</div>
<div class="abs" style="left:342px;top:353px;width:1510px;height:24px;background:#fbfbfb"></div>
<div class="dt" style="left:346px;top:360px">Качество</div>
<div class="dt" style="left:582px;top:360px">0</div>
<div class="abs" style="left:342px;top:378px;width:1510px;height:24px;background:#f5f5f5"></div>
<div class="dt" style="left:346px;top:385px">Вредность</div>
<div class="dt" style="left:582px;top:385px">0</div>
<div class="abs" style="left:342px;top:403px;width:1510px;height:24px;background:#fbfbfb"></div>
<div class="dt" style="left:346px;top:410px">Ночные</div>
<div class="dt" style="left:582px;top:410px">577.64</div>
<div class="dt" style="left:1522px;top:410px">в ночную смену 34 га</div>
<div class="abs" style="left:342px;top:428px;width:1510px;height:24px;background:#f5f5f5"></div>
<div class="dt" style="left:346px;top:435px">Уборочные</div>
<div class="abs" style="left:342px;top:453px;width:1510px;height:24px;background:#fbfbfb"></div>
<div class="dt" style="left:346px;top:460px">Классность</div>
<div class="abs" style="left:342px;top:478px;width:1510px;height:24px;background:#f5f5f5"></div>
<div class="dt" style="left:346px;top:485px">Праздничные</div>
<div class="abs" style="left:342px;top:277px;width:1510px;height:1px;background:#dcdcdc"></div>
<div class="abs" style="left:342px;top:302px;width:1510px;height:1px;background:#dcdcdc"></div>
<div class="abs" style="left:342px;top:327px;width:1510px;height:1px;background:#dcdcdc"></div>
<div class="abs" style="left:342px;top:352px;width:1510px;height:1px;background:#dcdcdc"></div>
<div class="abs" style="left:342px;top:377px;width:1510px;height:1px;background:#dcdcdc"></div>
<div class="abs" style="left:342px;top:402px;width:1510px;height:1px;background:#dcdcdc"></div>
<div class="abs" style="left:342px;top:427px;width:1510px;height:1px;background:#dcdcdc"></div>
<div class="abs" style="left:342px;top:452px;width:1510px;height:1px;background:#dcdcdc"></div>
<div class="abs" style="left:342px;top:477px;width:1510px;height:1px;background:#dcdcdc"></div>
<div class="abs" style="left:342px;top:502px;width:1510px;height:1px;background:#dcdcdc"></div>
<div class="abs" style="left:577px;top:278px;width:1px;height:225px;background:#dcdcdc"></div>
<div class="abs" style="left:1072px;top:278px;width:1px;height:225px;background:#dcdcdc"></div>
<div class="abs" style="left:1518px;top:278px;width:1px;height:225px;background:#dcdcdc"></div>
</body></html>
